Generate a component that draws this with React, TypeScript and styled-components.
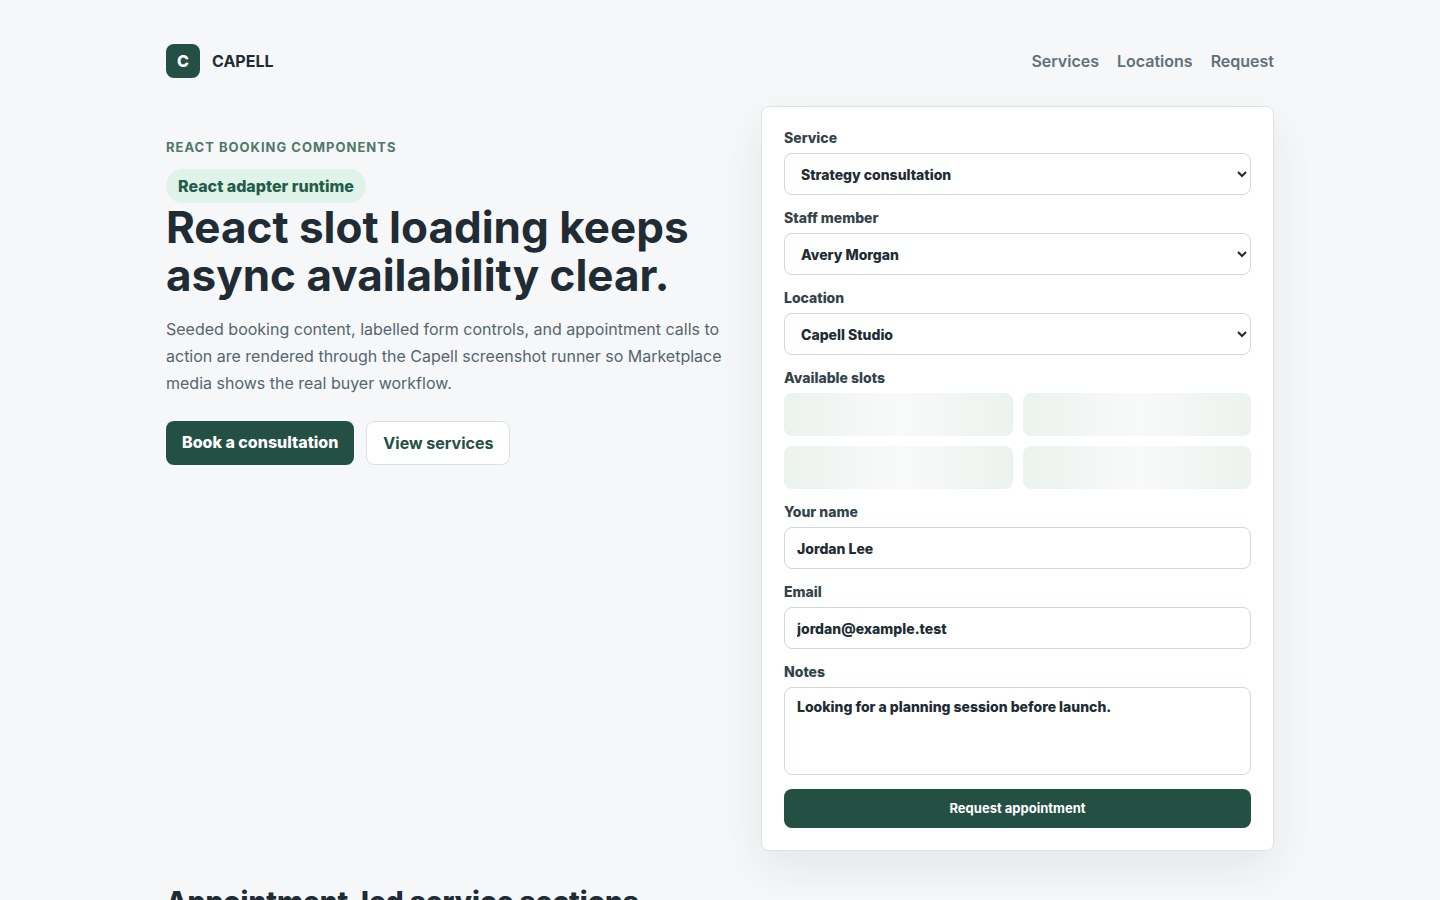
import React from "react";
import styled, { createGlobalStyle } from "styled-components";

const GlobalStyle = createGlobalStyle`
  *, *::before, *::after { box-sizing: border-box; }
  body {
    margin: 0;
    background: #f6f7f9;
    color: #202b33;
    font-family: Inter, "Liberation Sans", sans-serif;
    font-size: 16px;
    line-height: 24px;
  }
`;

const Page = styled.main`
  max-width: 1172px;
  margin: 0 auto;
  padding: 44px 32px;
`;

const TopBar = styled.header`
  display: flex;
  align-items: center;
  justify-content: space-between;
  margin-bottom: 28px;
`;

const Brand = styled.a`
  display: flex;
  align-items: center;
  gap: 12px;
  color: #202b33;
  font-weight: 700;
  text-decoration: none;
`;

const BrandMark = styled.span`
  display: grid;
  place-items: center;
  width: 34px;
  height: 34px;
  border-radius: 8px;
  background: #245044;
  color: #fff;
  font-weight: 800;
`;

const Nav = styled.nav`
  display: flex;
  gap: 18px;
`;

const NavLink = styled.a`
  color: #60707a;
  font-weight: 600;
  text-decoration: none;
`;

const Hero = styled.section`
  display: grid;
  grid-template-columns: minmax(0, 561fr) minmax(0, 513fr);
  gap: 34px;
  align-items: start;
`;

const Intro = styled.div`
  padding-top: 29px;
`;

const Eyebrow = styled.p`
  margin: 0 0 10px;
  color: #4f7868;
  font-size: 13px;
  font-weight: 700;
  letter-spacing: 1px;
  text-transform: uppercase;
`;

const Badge = styled.span`
  display: inline-flex;
  padding: 5px 12px;
  border-radius: 999px;
  background: #dff3e9;
  color: #245c4a;
  font-weight: 800;
`;

const Title = styled.h1`
  margin: 0 0 17px;
  font-size: 44px;
  font-weight: 700;
  line-height: 48px;
`;

const Lead = styled.p`
  margin: 0 0 24px;
  color: #54666e;
  font-size: 16px;
  line-height: 27px;
`;

const Actions = styled.div`
  display: flex;
  gap: 12px;
`;

const ActionLink = styled.a<{ $primary?: boolean }>`
  padding: 10px 16px;
  border: ${(p) => (p.$primary ? "0" : "1px solid #d8e4de")};
  border-radius: 8px;
  background: ${(p) => (p.$primary ? "#245044" : "#fff")};
  color: ${(p) => (p.$primary ? "#fff" : "#245044")};
  font-weight: ${(p) => (p.$primary ? 800 : 700)};
  line-height: 22px;
  text-decoration: none;
`;

const Form = styled.form`
  display: grid;
  gap: 14px;
  padding: 22px;
  border: 1px solid #dde5e2;
  border-radius: 8px;
  background: #fff;
  box-shadow: 0 18px 45px rgba(31, 41, 40, 0.08);
`;

const Field = styled.div`
  display: grid;
  gap: 6px;
  color: #33434b;
  font-size: 14px;
  font-weight: 800;
  line-height: 18px;
`;

const controlStyle = `
  width: 100%;
  height: 42px;
  padding: 10px 12px;
  border: 1px solid #cddbd7;
  border-radius: 8px;
  background: #fff;
  color: #202b33;
  font: inherit;
`;

const Select = styled.select`${controlStyle}`;
const Input = styled.input`${controlStyle}`;
const TextArea = styled.textarea`
  ${controlStyle}
  display: block;
  height: 88px;
  resize: none;
`;

const Slots = styled.div`
  display: grid;
  grid-template-columns: 1fr 1fr;
  gap: 10px;
`;

const Slot = styled.span`
  height: 43px;
  border-radius: 8px;
  background: linear-gradient(90deg, #ecf2ee, #f8faf9, #ecf2ee);
`;

const Submit = styled.button`
  padding: 11px 16px 12px;
  border: 0;
  border-radius: 8px;
  background: #245044;
  color: #fff;
  font-family: inherit;
  font-size: 13px;
  font-weight: 700;
  line-height: 16px;
`;

const SectionTitle = styled.h2`
  margin: 33px 0 18px;
  font-size: 28px;
  font-weight: 800;
  line-height: 36px;
`;

const choices = [
  { id: "service", label: "Service", value: "Strategy consultation" },
  { id: "staff", label: "Staff member", value: "Avery Morgan" },
  { id: "location", label: "Location", value: "Capell Studio" },
];

export default function App() {
  return (
    <Page>
      <GlobalStyle />
      <TopBar>
        <Brand href="#"><BrandMark>C</BrandMark>CAPELL</Brand>
        <Nav>
          <NavLink href="#services">Services</NavLink>
          <NavLink href="#locations">Locations</NavLink>
          <NavLink href="#request">Request</NavLink>
        </Nav>
      </TopBar>
      <Hero>
        <Intro>
          <Eyebrow>React booking components</Eyebrow>
          <Badge>React adapter runtime</Badge>
          <Title>React slot loading keeps async availability clear.</Title>
          <Lead>
            Seeded booking content, labelled form controls, and appointment calls to action are
            rendered through the Capell screenshot runner so Marketplace media shows the real buyer
            workflow.
          </Lead>
          <Actions>
            <ActionLink $primary href="#request">Book a consultation</ActionLink>
            <ActionLink href="#services">View services</ActionLink>
          </Actions>
        </Intro>
        <Form id="request" onSubmit={(e) => e.preventDefault()}>
          {choices.map((c) => (
            <Field key={c.id}>
              <label htmlFor={c.id}>{c.label}</label>
              <Select id={c.id}><option>{c.value}</option></Select>
            </Field>
          ))}
          <Field role="group" aria-labelledby="slots">
            <span id="slots">Available slots</span>
            <Slots>
              {[0, 1, 2, 3].map((n) => <Slot key={n} />)}
            </Slots>
          </Field>
          <Field>
            <label htmlFor="name">Your name</label>
            <Input id="name" defaultValue="Jordan Lee" />
          </Field>
          <Field>
            <label htmlFor="email">Email</label>
            <Input id="email" type="email" defaultValue="jordan@example.test" />
          </Field>
          <Field>
            <label htmlFor="notes">Notes</label>
            <TextArea id="notes" defaultValue="Looking for a planning session before launch." />
          </Field>
          <Submit type="submit">Request appointment</Submit>
        </Form>
      </Hero>
      <section id="services">
        <SectionTitle>Appointment-led service sections</SectionTitle>
      </section>
    </Page>
  );
}
